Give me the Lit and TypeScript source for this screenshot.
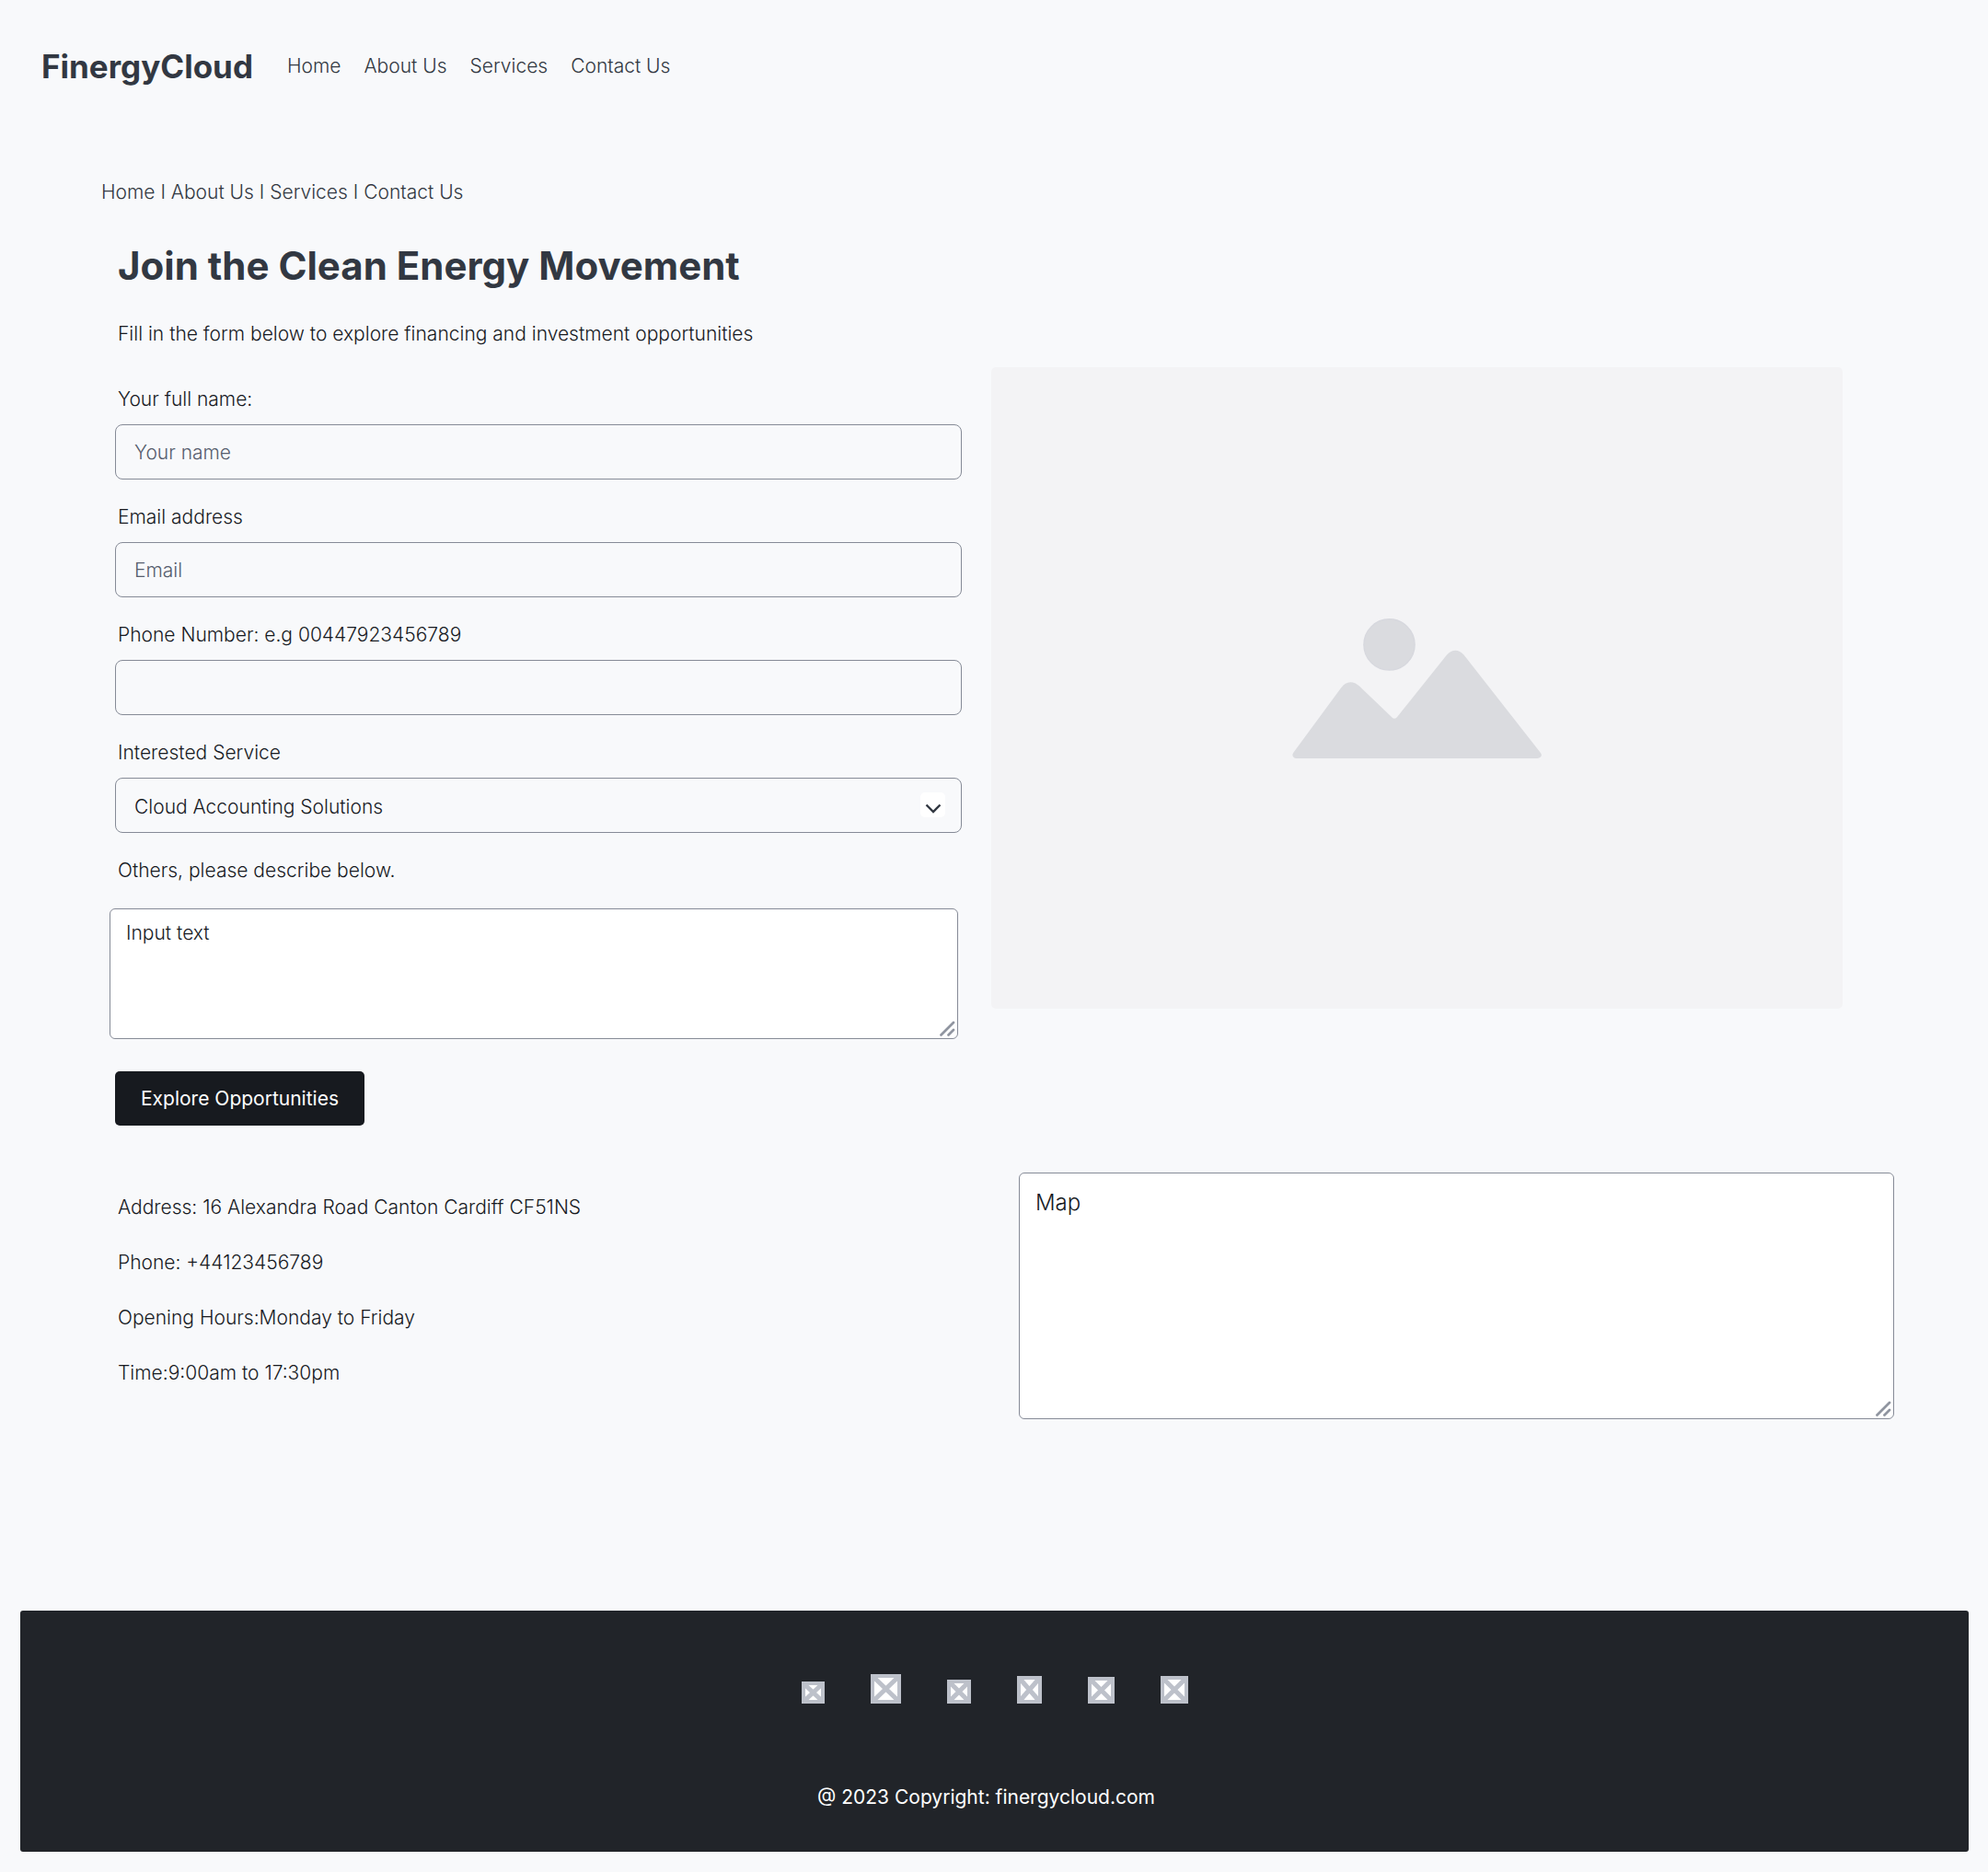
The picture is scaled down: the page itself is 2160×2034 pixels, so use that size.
import { LitElement, html, css, svg } from "lit";
import { customElement, property } from "lit/decorators.js";

const NAV_LINKS = ["Home", "About Us", "Services", "Contact Us"];

const CONTACT_LINES = [
  "Address: 16 Alexandra Road Canton Cardiff CF51NS",
  "Phone: +44123456789",
  "Opening Hours:Monday to Friday",
  "Time:9:00am to 17:30pm",
];

const SOCIAL_ICONS = [
  { name: "Facebook", width: 25, height: 24 },
  { name: "Twitter", width: 33, height: 32 },
  { name: "Instagram", width: 26, height: 26 },
  { name: "LinkedIn", width: 27, height: 30 },
  { name: "YouTube", width: 29, height: 29 },
  { name: "Email", width: 30, height: 30 },
];

@customElement("social-icon")
export class SocialIcon extends LitElement {
  @property({ type: Number }) width = 24;
  @property({ type: Number }) height = 24;

  static styles = css`
    :host {
      display: block;
    }
    .icon {
      display: block;
    }
  `;

  render() {
    const w = this.width;
    const h = this.height;
    return html`<svg class="icon" width=${w} height=${h} viewBox="0 0 ${w} ${h}" aria-hidden="true">
      ${svg`
        <rect width=${w} height=${h} fill="#bdc1ca" />
        <rect x="4" y="4" width=${w - 8} height=${h - 8} fill="#ffffff" />
        <path d="M4 4L${w - 4} ${h - 4}M${w - 4} 4L4 ${h - 4}" stroke="#bdc1ca" stroke-width="5" />
      `}
    </svg>`;
  }
}

@customElement("resize-grip")
export class ResizeGrip extends LitElement {
  static styles = css`
    :host {
      display: block;
      pointer-events: none;
    }
    .icon {
      display: block;
    }
  `;

  render() {
    return html`<svg class="icon" width="20" height="20" viewBox="0 0 20 20" aria-hidden="true">
      <path d="M3.5 17.5L17 4M11.5 17.5L17 12" fill="none" stroke="#9095a0" stroke-width="2.8" stroke-linecap="round" />
    </svg>`;
  }
}

@customElement("app-root")
export class AppRoot extends LitElement {
  static styles = css`
    :host {
      display: block;
      min-height: 100vh;
      background: #f8f9fb;
      color: #171a1f;
      font-family: Inter, "Liberation Sans", sans-serif;
      font-size: 21px;
      font-weight: 300;
      line-height: 24px;
    }
    *,
    *::before,
    *::after {
      box-sizing: border-box;
    }
    a {
      color: inherit;
      text-decoration: none;
    }
    .header {
      display: flex;
      align-items: center;
      gap: 37px;
      height: 144px;
      padding: 0 45px;
      color: #323842;
    }
    .brand {
      font-size: 35px;
      font-weight: 700;
      line-height: 48px;
    }
    .nav {
      display: flex;
      gap: 25px;
    }
    .intro {
      padding: 53px 128px 24px;
    }
    .crumbs {
      margin-left: -18px;
      color: #323842;
    }
    .title {
      margin: 44px 0 38px;
      color: #323842;
      font-size: 42px;
      font-weight: 700;
      line-height: 48px;
    }
    .lead {
      margin: 0;
    }
    .enquiry {
      display: grid;
      grid-template-columns: 1fr 1fr;
      gap: 32px;
      align-items: start;
      padding: 0 158px 0 119px;
    }
    .form {
      display: flex;
      flex-direction: column;
      padding-top: 23px;
    }
    .fields {
      display: flex;
      flex-direction: column;
      gap: 29px;
      padding-left: 6px;
    }
    .field {
      display: flex;
      flex-direction: column;
      gap: 15px;
    }
    .label {
      padding-left: 3px;
    }
    .control {
      display: block;
      width: 100%;
      height: 60px;
      margin: 0;
      padding: 0 20px;
      border: 1px solid #868b97;
      border-radius: 8px;
      outline: none;
      appearance: none;
      background: transparent;
      color: #171a1f;
      font: inherit;
    }
    .control::placeholder {
      color: #565d6d;
      opacity: 1;
    }
    .select-wrap {
      position: relative;
    }
    .select-wrap .control {
      padding-top: 4px;
    }
    .chevron {
      position: absolute;
      top: 16px;
      right: 18px;
      pointer-events: none;
    }
    .message {
      display: flex;
      flex-direction: column;
      gap: 29px;
      margin-top: 29px;
      padding-right: 4px;
    }
    .message .label {
      padding-left: 9px;
    }
    .area-wrap {
      position: relative;
    }
    .area {
      display: block;
      width: 100%;
      margin: 0;
      padding: 14px 17px;
      border: 1px solid #868b97;
      border-radius: 6px;
      outline: none;
      resize: none;
      background: #ffffff;
      color: #171a1f;
      font: inherit;
    }
    .area-message {
      height: 142px;
    }
    .area-map {
      height: 268px;
      padding: 20px 17px;
      font-size: 24px;
    }
    .grip {
      position: absolute;
      right: 2px;
      bottom: 2px;
    }
    .submit {
      align-self: flex-start;
      height: 59px;
      margin: 35px 0 0 6px;
      padding: 0 28px;
      border: 0;
      border-radius: 5px;
      background: #171a1f;
      color: #ffffff;
      font: inherit;
      font-weight: 400;
    }
    .picture {
      display: flex;
      align-items: center;
      justify-content: center;
      aspect-ratio: 925 / 697;
      border-radius: 5px;
      background: #f3f3f5;
    }
    .contact {
      display: grid;
      grid-template-columns: 1fr 1fr;
      gap: 32px;
      padding: 51px 102px 0 124px;
    }
    .details {
      display: flex;
      flex-direction: column;
      gap: 36px;
      padding: 26px 0 0 4px;
      font-style: normal;
    }
    .footer {
      display: flex;
      flex-direction: column;
      align-items: center;
      gap: 90px;
      margin: 208px 21px 22px 22px;
      padding: 69px 0 47px;
      border-radius: 3px;
      background: #212429;
      color: #ffffff;
      font-weight: 400;
    }
    .social {
      display: flex;
      align-items: flex-end;
      gap: 50px;
    }
    .copyright {
      margin: 0;
      padding-right: 18px;
    }
    .end {
      display: flow-root;
    }
  `;

  render() {
    return html`
      <header class="header">
        <a class="brand" href="#">FinergyCloud</a>
        <nav class="nav" aria-label="Main">
          ${NAV_LINKS.map((text) => html`<a href="#">${text}</a>`)}
        </nav>
      </header>

      <main>
        <section class="intro">
          <nav class="crumbs" aria-label="Breadcrumb">
            ${NAV_LINKS.map((text, i) => html`${i ? " I " : ""}<a href="#">${text}</a>`)}
          </nav>
          <h1 class="title">Join the Clean Energy Movement</h1>
          <p class="lead">Fill in the form below to explore financing and investment opportunities</p>
        </section>

        <section class="enquiry">
          <form class="form" @submit=${(e: Event) => e.preventDefault()}>
            <div class="fields">
              <div class="field">
                <label class="label" for="name">Your full name:</label>
                <input class="control" id="name" type="text" placeholder="Your name" />
              </div>
              <div class="field">
                <label class="label" for="email">Email address</label>
                <input class="control" id="email" type="email" placeholder="Email" />
              </div>
              <div class="field">
                <label class="label" for="phone">Phone Number: e.g 00447923456789</label>
                <input class="control" id="phone" type="tel" />
              </div>
              <div class="field">
                <label class="label" for="service">Interested Service</label>
                <div class="select-wrap">
                  <select class="control" id="service">
                    <option>Cloud Accounting Solutions</option>
                  </select>
                  <svg class="chevron" width="27" height="27" viewBox="0 0 27 27" aria-hidden="true">
                    <rect width="27" height="27" rx="5" fill="#ffffff" />
                    <path d="M6.5 13.5L14 21L21.5 13.5" fill="none" stroke="#323842" stroke-width="2.4" />
                  </svg>
                </div>
              </div>
            </div>
            <div class="message">
              <label class="label" for="message">Others, please describe below.</label>
              <div class="area-wrap">
                <textarea class="area area-message" id="message" .value=${"Input text"}></textarea>
                <resize-grip class="grip"></resize-grip>
              </div>
            </div>
            <button class="submit" type="submit">Explore Opportunities</button>
          </form>

          <div class="picture">
            <svg width="271" height="152" viewBox="25 31 271 152" aria-hidden="true">
              <circle cx="130.5" cy="59.4" r="27.6" fill="#dadbdf" stroke="#d7d8de" stroke-width="1.4" />
              <path
                fill="#dadbdf"
                d="M26.500 176.5L78 106.500C83.500 98.500 91.500 98.500 98 104.500L133.500 138.500Q136.500 141.500 139.500 137.500L193 70.500C198.500 64 206 64 211.500 70.500L294.500 176.500C297.500 179.500 295 183 291.500 183H29.500C26 183 24 179.500 26.500 176.500Z"
              />
            </svg>
          </div>
        </section>

        <section class="contact">
          <address class="details">${CONTACT_LINES.map((line) => html`<div>${line}</div>`)}</address>
          <div class="area-wrap">
            <textarea class="area area-map" aria-label="Map" .value=${"Map"}></textarea>
            <resize-grip class="grip"></resize-grip>
          </div>
        </section>
      </main>

      <div class="end">
        <footer class="footer">
          <div class="social">
            ${SOCIAL_ICONS.map(
              (icon) => html`<a href="#" aria-label=${icon.name}
                ><social-icon .width=${icon.width} .height=${icon.height}></social-icon
              ></a>`
            )}
          </div>
          <p class="copyright">@ 2023 Copyright: finergycloud.com</p>
        </footer>
      </div>
    `;
  }
}
